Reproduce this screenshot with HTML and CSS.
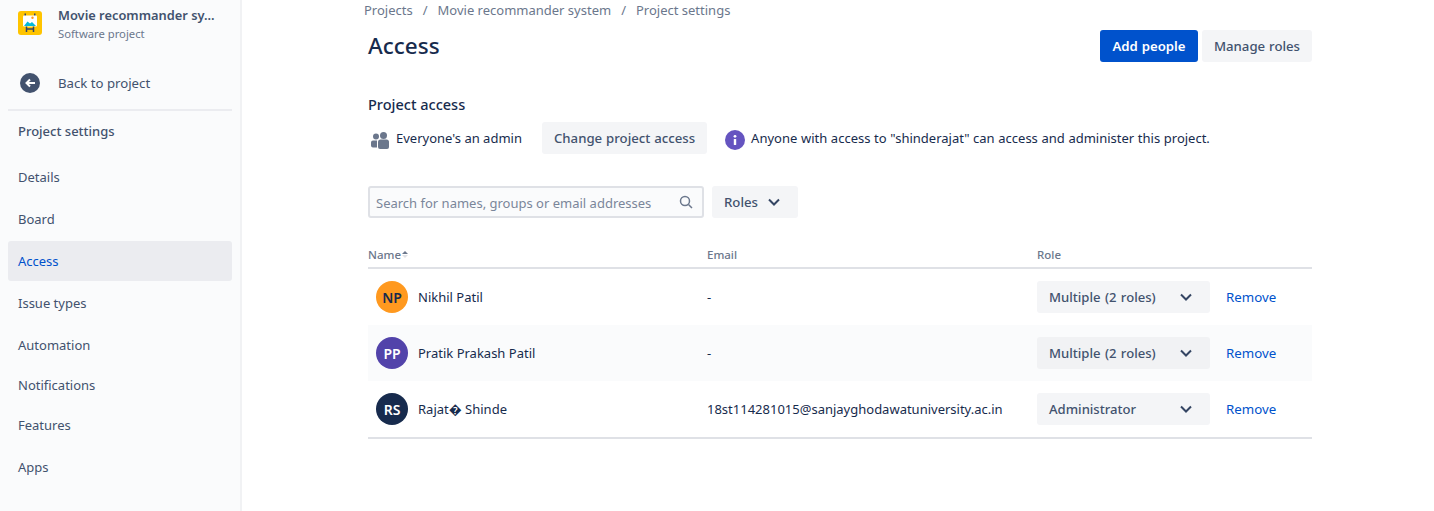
FILE: index.html
```html
<!DOCTYPE html>
<html lang="en">
<head>
  <meta charset="UTF-8">
  <title>Access - Project settings</title>
  <link rel="stylesheet" href="styles.css">
</head>
<body>
  <div class="page">
    <!-- Sidebar -->
    <aside class="sidebar">
      <div class="project">
        <svg class="project-icon" width="24" height="24" viewBox="0 0 24 24">
          <rect width="24" height="24" rx="3" fill="#ffc400"/>
          <rect x="6.500" y="2.500" width="1.500" height="3" fill="#344563"/>
          <rect x="16" y="2.500" width="1.500" height="3" fill="#344563"/>
          <rect x="5" y="4.500" width="14" height="11" rx="1" fill="#fff"/>
          <path d="M6 15l3.500-4.500 2.500 2 2-1.500 4 4z" fill="#00b8d9"/>
          <circle cx="14.500" cy="6.800" r="1.200" fill="#ff991f"/>
          <path d="M8.500 15.500V21M15.500 15.500V21M8.500 18h7" stroke="#344563" stroke-width="1.500" fill="none"/>
        </svg>
        <div class="project-text">
          <div class="project-name">Movie recommander sy...</div>
          <div class="project-type">Software project</div>
        </div>
      </div>

      <a class="back">
        <svg width="20" height="20" viewBox="0 0 20 20">
          <circle cx="10" cy="10" r="10" fill="#42526e"/>
          <path d="M15 10H7M10 6.500L6.500 10l3.500 3.500" stroke="#fff" stroke-width="2" fill="none"/>
        </svg>
        <span>Back to project</span>
      </a>

      <h2 class="side-title">Project settings</h2>

      <nav class="side-nav">
        <a class="side-item">Details</a>
        <a class="side-item">Board</a>
        <a class="side-item active">Access</a>
        <a class="side-item">Issue types</a>
        <a class="side-item tight">Automation</a>
        <a class="side-item tight">Notifications</a>
        <a class="side-item">Features</a>
        <a class="side-item">Apps</a>
      </nav>
    </aside>

    <!-- Main content -->
    <main class="content">
      <div class="breadcrumbs">
        <span>Projects</span><span class="sep">/</span><span>Movie recommander system</span><span class="sep">/</span><span>Project settings</span>
      </div>

      <div class="page-head">
        <h1>Access</h1>
        <div class="head-actions">
          <button class="btn primary" type="button">Add people</button>
          <button class="btn" type="button">Manage roles</button>
        </div>
      </div>

      <h3 class="section-title">Project access</h3>
      <div class="access-row">
        <svg class="people-icon" width="20" height="20" viewBox="0 0 20 20" fill="#6b778c">
          <circle cx="6" cy="6.500" r="3"/>
          <circle cx="13.500" cy="5.500" r="3.500"/>
          <path d="M1 12.500a2 2 0 0 1 2-2h4v7H3a2 2 0 0 1-2-2z"/>
          <path d="M8 12a2.500 2.500 0 0 1 2.500-2.500h6A2.500 2.500 0 0 1 19 12v5a2 2 0 0 1-2 2h-7a2 2 0 0 1-2-2z"/>
        </svg>
        <span class="access-label">Everyone's an admin</span>
        <button class="btn" type="button">Change project access</button>
        <svg class="info-icon" width="20" height="20" viewBox="0 0 20 20">
          <circle cx="10" cy="10" r="10" fill="#6554c0"/>
          <rect x="8.800" y="9" width="2.400" height="6" rx="0.500" fill="#fff"/>
          <circle cx="10" cy="6.300" r="1.400" fill="#fff"/>
        </svg>
        <span class="access-note">Anyone with access to "shinderajat" can access and administer this project.</span>
      </div>

      <div class="filters">
        <label class="search">
          <input type="text" placeholder="Search for names, groups or email addresses">
          <svg width="16" height="16" viewBox="0 0 16 16" fill="none" stroke="#6b778c" stroke-width="1.500">
            <circle cx="7" cy="7" r="4.500"/>
            <path d="M10.500 10.500L14 14"/>
          </svg>
        </label>
        <button class="btn roles-btn" type="button">
          Roles
          <svg class="chev" width="12" height="8" viewBox="0 0 12 8"><path d="M1 1.500l5 5 5-5" fill="none" stroke="#344563" stroke-width="2"/></svg>
        </button>
      </div>

      <table class="people">
        <thead>
          <tr>
            <th class="col-name">Name<svg class="sort" width="6" height="8" viewBox="0 0 6 8"><path d="M3 1l3 3H0z" fill="#6b778c"/><path d="M3 8L0 5h6z" fill="#dfe1e6"/></svg></th>
            <th class="col-email">Email</th>
            <th class="col-role">Role</th>
            <th></th>
          </tr>
        </thead>
        <tbody>
          <tr>
            <td><div class="person"><span class="avatar orange">NP</span>Nikhil Patil</div></td>
            <td>-</td>
            <td><div class="role-select">Multiple (2 roles)<svg class="chev" width="12" height="8" viewBox="0 0 12 8"><path d="M1 1.500l5 5 5-5" fill="none" stroke="#344563" stroke-width="2"/></svg></div></td>
            <td><a class="remove">Remove</a></td>
          </tr>
          <tr class="striped">
            <td><div class="person"><span class="avatar purple">PP</span>Pratik Prakash Patil</div></td>
            <td>-</td>
            <td><div class="role-select">Multiple (2 roles)<svg class="chev" width="12" height="8" viewBox="0 0 12 8"><path d="M1 1.500l5 5 5-5" fill="none" stroke="#344563" stroke-width="2"/></svg></div></td>
            <td><a class="remove">Remove</a></td>
          </tr>
          <tr>
            <td><div class="person"><span class="avatar navy">RS</span>Rajat� Shinde</div></td>
            <td>18st114281015@sanjayghodawatuniversity.ac.in</td>
            <td><div class="role-select">Administrator<svg class="chev" width="12" height="8" viewBox="0 0 12 8"><path d="M1 1.500l5 5 5-5" fill="none" stroke="#344563" stroke-width="2"/></svg></div></td>
            <td><a class="remove">Remove</a></td>
          </tr>
        </tbody>
      </table>
    </main>
  </div>
</body>
</html>
```

FILE: styles.css
```css
* {
  margin: 0;
  padding: 0;
  box-sizing: border-box;
  font-family: "Noto Sans", "Open Sans", sans-serif;
}

html, body {
  height: 511px;
  overflow: hidden;
  background: #fff;
}

body {
  font-size: 13px;
  color: #172b4d;
}

.page {
  display: flex;
  height: 511px;
}

/* Sidebar */
.sidebar {
  width: 242px;
  flex-shrink: 0;
  background: #fafbfc;
  border-right: 2px solid #f1f2f4;
  padding: 0 8px;
  color: #42526e;
}

.project {
  display: flex;
  align-items: flex-start;
  gap: 16px;
  padding: 11px 10px 0;
  height: 63px;
}

.project-text {
  margin-top: -6px;
}

.project-name {
  font-weight: 600;
  font-size: 12.850px;
  line-height: 20px;
  white-space: nowrap;
}

.project-type {
  font-size: 11.250px;
  line-height: 16px;
  color: #6b778c;
  margin-top: 1px;
}

.back {
  display: flex;
  align-items: center;
  gap: 18px;
  height: 40px;
  padding-left: 12px;
  font-size: 13.200px;
  margin-bottom: 6px;
}

.side-title {
  border-top: 2px solid #ebecf0;
  font-size: 13px;
  font-weight: 500;
  line-height: 20px;
  padding: 10px 10px 0;
  height: 46px;
  color: #42526e;
}

.side-nav {
  display: flex;
  flex-direction: column;
  padding-top: 2px;
  gap: 2px;
}

.side-item {
  display: flex;
  align-items: center;
  height: 40px;
  padding-left: 10px;
  border-radius: 3px;
}

.side-item.tight {
  margin-bottom: -2px;
}

.side-item.active {
  background: #ebecf0;
  color: #0052cc;
}

/* Main */
.content {
  width: 944px;
  margin-left: 126px;
}

.breadcrumbs {
  display: flex;
  height: 20px;
  margin-left: -4px;
  line-height: 20px;
  color: #6b778c;
  font-size: 13px;
}

.sep {
  padding: 0 10px;
}

.page-head {
  display: flex;
  justify-content: space-between;
  align-items: flex-start;
  height: 62px;
  padding-top: 10px;
}

h1 {
  font-size: 22.500px;
  font-weight: 500;
  line-height: 31px;
}

.head-actions {
  display: flex;
  gap: 4px;
}

.btn {
  height: 32px;
  padding: 0 12px;
  border: none;
  border-radius: 3px;
  background: #f4f5f7;
  color: #42526e;
  font-size: 13.200px;
  word-spacing: 0.500px;
  font-weight: 500;
  white-space: nowrap;
}

.btn.primary {
  width: 98px;
  background: #0052cc;
  color: #fff;
  font-weight: 600;
}

.section-title {
  font-size: 14.500px;
  font-weight: 500;
  line-height: 18px;
  margin-top: 13px;
}

.access-row {
  display: flex;
  align-items: center;
  height: 32px;
  margin-top: 9px;
}

.people-icon {
  margin-left: 2px;
  margin-top: 3px;
}

.access-label {
  margin-left: 6px;
  margin-right: 20px;
}

.info-icon {
  margin-left: 18px;
  margin-right: 6px;
  margin-top: 3px;
}

.access-note {
  word-spacing: 0.250px;
}

.filters {
  display: flex;
  gap: 8px;
  margin-top: 32px;
}

.search {
  display: flex;
  align-items: center;
  justify-content: space-between;
  width: 336px;
  height: 32px;
  padding: 0 8px 0 6px;
  background: #fafbfc;
  border: 2px solid #dfe1e6;
  border-radius: 3px;
}

.search input {
  flex: 1;
  border: none;
  outline: none;
  background: transparent;
  font-size: 13px;
  color: #172b4d;
  padding-top: 2px;
}

.search input::placeholder {
  color: #7a869a;
  opacity: 1;
}

.roles-btn {
  display: flex;
  align-items: center;
  gap: 10px;
  width: 86px;
}

.people {
  width: 944px;
  margin-top: 27px;
  border-collapse: separate;
  border-spacing: 0;
  table-layout: fixed;
}

.people th {
  height: 24px;
  text-align: left;
  font-size: 11.500px;
  font-weight: 500;
  color: #6b778c;
  border-bottom: 2px solid #dfe1e6;
  vertical-align: middle;
  padding-bottom: 4px;
}

.col-name { width: 339px; }
.col-email { width: 330px; }
.col-role { width: 189px; }

.sort {
  margin-left: 1px;
  vertical-align: 1px;
}

.people td {
  height: 56px;
  vertical-align: middle;
}

.people tbody tr:last-child td {
  height: 58px;
  border-bottom: 2px solid #dfe1e6;
}

.striped {
  background: #fafbfc;
}

.person {
  display: flex;
  align-items: center;
  gap: 10px;
  padding-left: 8px;
}

.avatar {
  display: flex;
  align-items: center;
  justify-content: center;
  width: 32px;
  height: 32px;
  border-radius: 50%;
  font-size: 14px;
  font-weight: 600;
  color: #fff;
}

.avatar.orange {
  background: #ff991f;
  color: #172b4d;
}

.avatar.purple {
  background: #5243aa;
}

.avatar.navy {
  background: #172b4d;
}

.role-select {
  display: flex;
  align-items: center;
  justify-content: space-between;
  width: 173px;
  height: 32px;
  padding: 0 18px 0 12px;
  background: #f4f5f7;
  border-radius: 3px;
  color: #42526e;
  font-size: 13.100px;
  word-spacing: 1px;
  font-weight: 500;
}

.striped .role-select {
  background: #f1f2f4;
}

.remove {
  color: #0052cc;
  font-size: 13.300px;
}
```
